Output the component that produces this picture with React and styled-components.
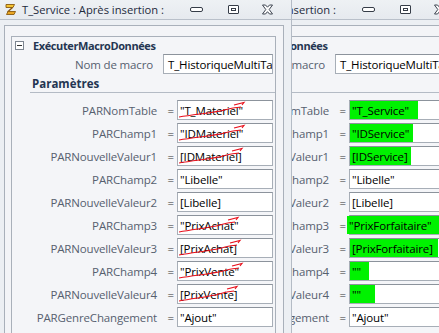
import React from 'react'
import styled, { createGlobalStyle } from 'styled-components'

const Global = createGlobalStyle`
  html, body { margin: 0; padding: 0; background: #e7ebf0; }
  body { font-family: "Open Sans", "Noto Sans", sans-serif; }
`

const Desktop = styled.div`
  position: relative;
  width: 439px;
  height: 333px;
  overflow: hidden;
  background: #e7ebf0;
`

const Win = styled.div`
  position: absolute;
  top: 0;
  left: ${p => p.$x}px;
  width: ${p => p.$w}px;
  height: 333px;
  display: flex;
  flex-direction: column;
  background: #eceff3;
  border-right: ${p => (p.$front ? '1px solid #b4bbc5' : 'none')};
  box-sizing: border-box;
  overflow: hidden;
`

const TitleBar = styled.div`
  height: 20px;
  flex: none;
  display: flex;
  align-items: center;
  padding-left: 4px;
  background: linear-gradient(#eef1f4, #e6eaef);
  border-bottom: 1px solid #b9c0ca;
  box-sizing: border-box;
`

const Title = styled.span`
  width: 172px;
  flex: none;
  padding-left: 5px;
  box-sizing: border-box;
  font-size: 11.2px;
  color: #1e2a3c;
  white-space: nowrap;
  overflow: hidden;
`

const Ctl = styled.span`
  flex: none;
  width: ${p => p.$w}px;
  height: ${p => p.$h}px;
  margin-left: ${p => p.$gap}px;
  box-sizing: border-box;
  border: 1px solid #363d48;
  border-radius: ${p => p.$r}px;
  background: #ffffff;
  display: flex;
  align-items: center;
  justify-content: center;
`

const Bar = styled.span`
  width: 5px;
  height: 3px;
  box-sizing: border-box;
  border: 1px solid #363d48;
`

const Body = styled.div`
  flex: 1;
  padding: 5px 7px 0 4px;
  display: flex;
`

const Outer = styled.div`
  flex: 1;
  border: 1px solid #a9b0ba;
  border-bottom: none;
  background: #f3f4f7;
  padding: 10px 7px 0 6px;
  display: flex;
`

const Inner = styled.div`
  flex: 1;
  border-left: 1px solid #a9b0ba;
  border-top: 1px solid #a9b0ba;
  border-right: 1px solid #a9b0ba;
  background: #f4f5f8;
  display: flex;
  flex-direction: column;
`

const Heading = styled.div`
  height: 17px;
  display: flex;
  align-items: center;
  padding-left: 3px;
  gap: 9px;
  font-weight: 700;
  font-size: 11px;
  color: #243552;
  letter-spacing: -0.4px;
  white-space: nowrap;
`

const Minus = styled.span`
  flex: none;
  width: 7px;
  height: 7px;
  border: 1px solid #7d8590;
  background: #fff;
  position: relative;
  &::after {
    content: '';
    position: absolute;
    left: 1px;
    right: 1px;
    top: 3px;
    height: 1px;
    background: #333;
  }
`

const MacroRow = styled.div`
  display: grid;
  grid-template-columns: 141px 10px 110px;
  height: 20px;
  align-items: center;
`

const Label = styled.span`
  text-align: right;
  font-size: 11.5px;
  color: #56606f;
  white-space: nowrap;
  letter-spacing: -0.15px;
`

const Section = styled.div`
  margin-left: 18px;
  padding-left: 2px;
  height: 18px;
  display: flex;
  align-items: center;
  font-weight: 700;
  font-size: 11.5px;
  color: #243552;
  border-bottom: 1px solid #b4bbc5;
`

const Params = styled.div`
  display: grid;
  grid-template-columns: 145px 20px 96px;
  grid-auto-rows: 20px;
  row-gap: 3px;
  margin-top: 7px;
  align-items: center;
`

const Eq = styled.span`
  text-align: right;
  padding-right: 3px;
  font-size: 11.5px;
  color: #333;
`

const Field = styled.div`
  position: relative;
  height: 20px;
  box-sizing: border-box;
  border: 1px solid #a7aeb7;
  border-top-color: #8c939c;
  background: #fff;
  display: flex;
  align-items: stretch;
  overflow: ${p => (p.$open ? 'visible' : 'hidden')};
`

const Value = styled.span`
  display: flex;
  align-items: center;
  padding-left: ${p => p.$pad ?? 2}px;
  font-size: 11.5px;
  color: #000;
  white-space: nowrap;
  letter-spacing: -0.15px;
  background: ${p => (p.$hl ? '#00f200' : 'transparent')};
  width: ${p => (p.$hl ? `${p.$hl}px` : 'auto')};
  margin-left: ${p => p.$shift ?? 0}px;
  flex: none;
`

const Strike = styled.svg`
  position: absolute;
  left: 0;
  top: 0;
  pointer-events: none;
`

function MacroIcon() {
  return (
    <svg width="13" height="13" viewBox="0 0 13 13" style={{ flex: 'none' }}>
      <path d="M2 1.5h8.5l-1.5 3H2z" fill="#f4c431" stroke="#8a5a10" strokeWidth="0.9" />
      <path d="M8.5 4.5 3.5 9" stroke="#8a5a10" strokeWidth="1.3" />
      <path d="M4 8.5h7.5l-1.5 3H2.5z" fill="#e9a623" stroke="#8a5a10" strokeWidth="0.9" />
    </svg>
  )
}

function WinButtons() {
  return (
    <>
      <Ctl $w={13} $h={5} $r={2} $gap={1} />
      <Ctl $w={11} $h={9} $r={1} $gap={25}>
        <Bar />
      </Ctl>
      <svg width="13" height="11" viewBox="0 0 13 11" style={{ flex: 'none', marginLeft: 22 }}>
        <path d="M1.5 1h3l2 2.2L8.5 1h3L8.2 5.5l3.3 4.5h-3l-2-2.3-2 2.3h-3L4.8 5.5z" fill="#fff" stroke="#3d4450" strokeWidth="1" strokeLinejoin="round" />
      </svg>
    </>
  )
}

function RedStrike({ w }) {
  return (
    <Strike width={w + 12} height="18" viewBox={`0 0 ${w + 12} 18`}>
      <path
        d={`M1 16 C ${w * 0.3} 13, ${w * 0.55} 12, ${w * 0.75} 9 S ${w - 4} 7, ${w + 1} 6`}
        fill="none"
        stroke="#e8101c"
        strokeWidth="1.1"
      />
      <path d={`M${w - 6} 4 L${w + 4} 1.5 L${w + 2} 4`} fill="none" stroke="#e8101c" strokeWidth="1.1" />
    </Strike>
  )
}

const labels = [
  'PARNomTable',
  'PARChamp1',
  'PARNouvelleValeur1',
  'PARChamp2',
  'PARNouvelleValeur2',
  'PARChamp3',
  'PARNouvelleValeur3',
  'PARChamp4',
  'PARNouvelleValeur4',
  'PARGenreChangement',
]

const before = [
  { v: '"T_Materiel"', strike: 62 },
  { v: '"IDMateriel"', strike: 62 },
  { v: '[IDMateriel]', strike: 60 },
  { v: '"Libelle"' },
  { v: '[Libelle]' },
  { v: '"PrixAchat"', strike: 56 },
  { v: '[PrixAchat]', strike: 58 },
  { v: '"PrixVente"', strike: 60 },
  { v: '[PrixVente]', strike: 55 },
  { v: '"Ajout"' },
]

const after = [
  { v: '"T_Service"', hl: 66 },
  { v: '"IDService"', hl: 61 },
  { v: '[IDService]', hl: 59 },
  { v: '"Libelle"' },
  { v: '[Libelle]' },
  { v: '"PrixForfaitaire"', hl: 91, shift: -3 },
  { v: '[PrixForfaitaire]', hl: 86 },
  { v: '""', hl: 17 },
  { v: '""', hl: 23 },
  { v: '"Ajout"' },
]

function MacroWindow({ x, w, front, values }) {
  return (
    <Win $x={x} $w={w} $front={front}>
      <TitleBar>
        <MacroIcon />
        <Title>T_Service : Après insertion :</Title>
        <WinButtons />
      </TitleBar>
      <Body>
        <Outer>
          <Inner>
            <Heading>
              <Minus />
              ExécuterMacroDonnées
            </Heading>
            <MacroRow>
              <Label>Nom de macro</Label>
              <span />
              <Field>
                <Value $pad={4}>T_HistoriqueMultiTable</Value>
              </Field>
            </MacroRow>
            <Section>Paramètres</Section>
            <Params>
              {labels.map((l, i) => {
                const item = values[i]
                return (
                  <React.Fragment key={l}>
                    <Label>{l}</Label>
                    <Eq>=</Eq>
                    <Field $open={!!item.hl}>
                      <Value $hl={item.hl} $shift={item.shift}>{item.v}</Value>
                      {item.strike && <RedStrike w={item.strike} />}
                    </Field>
                  </React.Fragment>
                )
              })}
            </Params>
          </Inner>
        </Outer>
      </Body>
    </Win>
  )
}

export default function App() {
  return (
    <Desktop>
      <Global />
      <MacroWindow x={172} w={292} values={after} />
      <MacroWindow x={0} w={292} front values={before} />
    </Desktop>
  )
}
